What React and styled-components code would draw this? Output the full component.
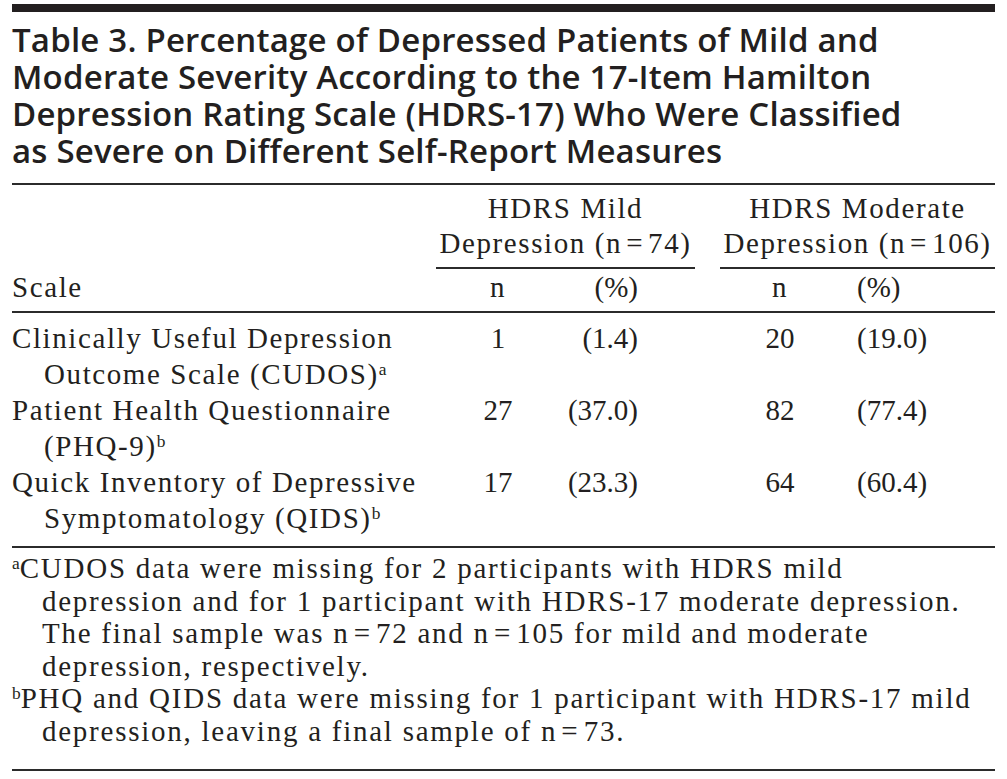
import React from "react";
import styled, { createGlobalStyle } from "styled-components";

const ink = "#231f20";
const rule = "#2b2b2b";

const GlobalStyle = createGlobalStyle`
  html, body {
    margin: 0;
    padding: 0;
    background: #ffffff;
  }
`;

const Page = styled.div`
  width: 983px;
  margin: 0 12px;
  padding-top: 4px;
  color: ${ink};
  font-family: "Liberation Serif", "Times New Roman", serif;
`;

const TopBar = styled.div`
  height: 8px;
  background: ${ink};
`;

const Title = styled.h1`
  margin: 0;
  padding: 9px 0 14px;
  font-family: "Open Sans", "Noto Sans", sans-serif;
  font-weight: 600;
  font-size: 33px;
  line-height: 37px;
  letter-spacing: 0.2px;
  white-space: nowrap;
  border-bottom: 2px solid ${rule};
`;

const Grid = styled.div`
  display: grid;
  grid-template-columns: 424px 124px 135px 25px 120px 155px;
  font-size: 29px;
  letter-spacing: 1.6px;
`;

const GroupHead = styled.div`
  grid-column: ${(p) => p.$col};
  padding: 6px 0;
  line-height: 35px;
  text-align: center;
  white-space: nowrap;
  border-bottom: 2px solid ${rule};
`;

const SubRow = styled.div`
  grid-column: 1 / -1;
  display: grid;
  grid-template-columns: subgrid;
  padding: ${(p) => p.$pad};
  border-bottom: 2px solid ${rule};
`;

const Cell = styled.div`
  grid-column: ${(p) => p.$col};
  line-height: ${(p) => (p.$head ? 35 : 36)}px;
  text-align: ${(p) => p.$align || "left"};
  padding-left: ${(p) => p.$pl || 0}px;
  padding-right: ${(p) => p.$pr || 0}px;
  letter-spacing: ${(p) => (p.$num ? "0" : "inherit")};
`;

const Label = styled.div`
  grid-column: 1;
  line-height: 36px;
  padding-left: 32px;
  text-indent: -32px;
  white-space: nowrap;
`;

const Sup = styled.sup`
  font-size: 0.6em;
  vertical-align: 0.5em;
  line-height: 0;
  letter-spacing: 0;
`;

const Notes = styled.div`
  padding: 4px 0 22px;
  font-size: 29px;
  line-height: 32.5px;
  letter-spacing: 1.75px;
  white-space: nowrap;
  border-bottom: 2px solid ${rule};
`;

const Note = styled.p`
  margin: 0;
  padding-left: 30px;
  text-indent: -30px;
`;

const eq = "\u200a=\u200a";

const rows = [
  {
    label: (
      <>
        Clinically Useful Depression
        <br />
        Outcome Scale (CUDOS)<Sup>a</Sup>
      </>
    ),
    values: ["1", "(1.4)", "20", "(19.0)"],
  },
  {
    label: (
      <>
        Patient Health Questionnaire
        <br />
        (PHQ-9)<Sup>b</Sup>
      </>
    ),
    values: ["27", "(37.0)", "82", "(77.4)"],
  },
  {
    label: (
      <>
        Quick Inventory of Depressive
        <br />
        Symptomatology (QIDS)<Sup>b</Sup>
      </>
    ),
    values: ["17", "(23.3)", "64", "(60.4)"],
  },
];

const App = () => {
  return (
    <Page>
      <GlobalStyle />
      <TopBar />
      <Title>
        Table 3. Percentage of Depressed Patients of Mild and
        <br />
        Moderate Severity According to the 17-Item Hamilton
        <br />
        Depression Rating Scale (HDRS-17) Who Were Classified
        <br />
        as Severe on Different Self-Report Measures
      </Title>
      <Grid>
        <GroupHead $col="2 / 4">
          HDRS Mild
          <br />
          Depression (n{eq}74)
        </GroupHead>
        <GroupHead $col="5 / 7">
          HDRS Moderate
          <br />
          Depression (n{eq}106)
        </GroupHead>
        <SubRow $pad="1px 0 6px">
          <Cell $head $col={1}>Scale</Cell>
          <Cell $head $col={2} $align="center">n</Cell>
          <Cell $head $num $col={3} $align="right" $pr={57}>(%)</Cell>
          <Cell $head $col={5} $align="center">n</Cell>
          <Cell $head $num $col={6} $pl={17}>(%)</Cell>
        </SubRow>
        <SubRow $pad="7px 0 10px">
          {rows.map((r, i) => (
            <React.Fragment key={i}>
              <Label style={{ gridRow: i + 1 }}>{r.label}</Label>
              <Cell $num $col={2} $align="center" style={{ gridRow: i + 1 }}>
                {r.values[0]}
              </Cell>
              <Cell $num $col={3} $align="right" $pr={57} style={{ gridRow: i + 1 }}>
                {r.values[1]}
              </Cell>
              <Cell $num $col={5} $align="center" style={{ gridRow: i + 1 }}>
                {r.values[2]}
              </Cell>
              <Cell $num $col={6} $pl={17} style={{ gridRow: i + 1 }}>
                {r.values[3]}
              </Cell>
            </React.Fragment>
          ))}
        </SubRow>
      </Grid>
      <Notes>
        <Note>
          <Sup>a</Sup>CUDOS data were missing for 2 participants with HDRS mild
          <br />
          depression and for 1 participant with HDRS-17 moderate depression.
          <br />
          The final sample was n{eq}72 and n{eq}105 for mild and moderate
          <br />
          depression, respectively.
        </Note>
        <Note>
          <Sup>b</Sup>PHQ and QIDS data were missing for 1 participant with HDRS-17 mild
          <br />
          depression, leaving a final sample of n{eq}73.
        </Note>
      </Notes>
    </Page>
  );
};

export default App;
